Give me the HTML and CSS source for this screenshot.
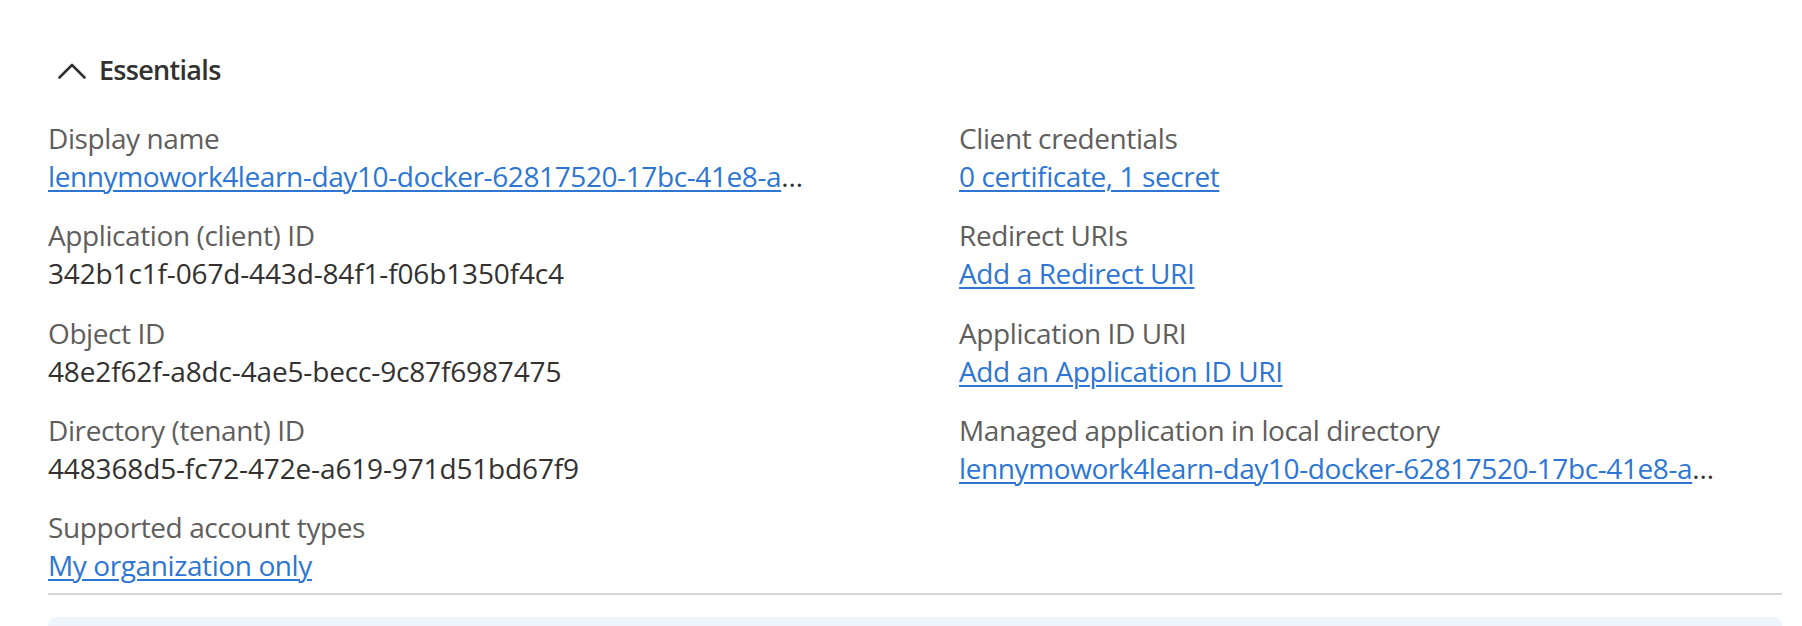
FILE: index.html
```html
<!DOCTYPE html>
<html lang="en">
<head>
<meta charset="utf-8">
<title>Essentials</title>
<link rel="stylesheet" href="styles.css">
</head>
<body>
<section class="essentials">
  <div class="header">
    <svg class="chevron" width="28" height="16" viewBox="0 0 28 16" aria-hidden="true">
      <path d="M1.5 14.5 L14 2 L26.5 14.5" fill="none" stroke="#323130" stroke-width="2.6" stroke-linecap="round" stroke-linejoin="round"/>
    </svg>
    <span class="title">Essentials</span>
  </div>
  <div class="grid">
    <div class="col">
      <div class="item">
        <div class="label">Display name</div>
        <div class="value"><a class="link" href="#">lennymowork4learn-day10-docker-62817520-17bc-41e8-a6b2-9f1c3d5e7a01</a></div>
      </div>
      <div class="item">
        <div class="label">Application (client) ID</div>
        <div class="value id">342b1c1f-067d-443d-84f1-f06b1350f4c4</div>
      </div>
      <div class="item">
        <div class="label">Object ID</div>
        <div class="value id">48e2f62f-a8dc-4ae5-becc-9c87f6987475</div>
      </div>
      <div class="item">
        <div class="label">Directory (tenant) ID</div>
        <div class="value id">448368d5-fc72-472e-a619-971d51bd67f9</div>
      </div>
      <div class="item">
        <div class="label">Supported account types</div>
        <div class="value"><a class="link" href="#">My organization only</a></div>
      </div>
    </div>
    <div class="col">
      <div class="item">
        <div class="label">Client credentials</div>
        <div class="value"><a class="link" href="#">0 certificate, 1 secret</a></div>
      </div>
      <div class="item">
        <div class="label">Redirect URIs</div>
        <div class="value"><a class="link" href="#">Add a Redirect URI</a></div>
      </div>
      <div class="item">
        <div class="label">Application ID URI</div>
        <div class="value"><a class="link" href="#">Add an Application ID URI</a></div>
      </div>
      <div class="item">
        <div class="label">Managed application in local directory</div>
        <div class="value"><a class="link" href="#">lennymowork4learn-day10-docker-62817520-17bc-41e8-a6b2-9f1c3d5e7a01</a></div>
      </div>
    </div>
  </div>
  <div class="divider"></div>
  <div class="notice"></div>
</section>
</body>
</html>
```

FILE: styles.css
```css
html, body {
  margin: 0;
  padding: 0;
  background: #ffffff;
}

body {
  font-family: "Open Sans", "Noto Sans", "Liberation Sans", sans-serif;
  font-size: 28px;
  color: #323130;
  letter-spacing: -0.4px;
  height: 626px;
  overflow: hidden;
}

.essentials {
  padding: 51px 20px 0 48px;
}

.header {
  display: flex;
  align-items: center;
  gap: 13px;
  padding-left: 10px;
  height: 38px;
}

.chevron {
  display: block;
  margin-top: 1px;
}

.title {
  font-size: 27px;
  font-weight: 600;
  letter-spacing: -0.7px;
  line-height: 38px;
  color: #323130;
}

.grid {
  display: grid;
  grid-template-columns: 911px 1fr;
  margin-top: 30px;
}

.col {
  display: flex;
  flex-direction: column;
  gap: 21.25px;
}

.item {
  display: flex;
  flex-direction: column;
  min-width: 0;
}

.label {
  line-height: 38px;
  color: #605e5c;
  white-space: nowrap;
}

.value {
  line-height: 38px;
  color: #323130;
  white-space: nowrap;
  overflow: hidden;
  text-overflow: ellipsis;
  max-width: 762px;
}

.value.id {
  letter-spacing: -0.15px;
}

.link {
  color: #2d76d4;
  text-decoration: underline;
  text-decoration-thickness: 2px;
  text-underline-offset: 3px;
}

.divider {
  height: 2px;
  background: #d6d6d6;
  margin-top: 9px;
}

.notice {
  margin-top: 22px;
  height: 9px;
  background: #eff5fd;
  border-radius: 8px 8px 0 0;
}
```
